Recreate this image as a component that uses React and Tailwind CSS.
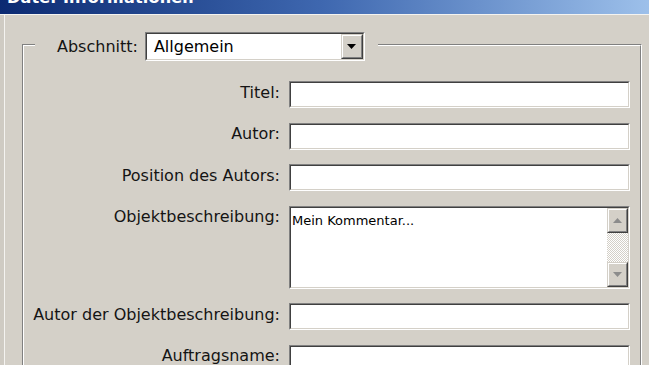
import React from "react";

const Sunken = ({ className = "", innerClassName = "", children }) => (
  <div className={`border border-t-[#808080] border-l-[#808080] border-b-white border-r-white ${className}`}>
    <div className={`h-full border border-t-[#404040] border-l-[#404040] border-b-[#d4d0c8] border-r-[#d4d0c8] bg-white ${innerClassName}`}>
      {children}
    </div>
  </div>
);

const RaisedButton = ({ className = "", children }) => (
  <div className={`border border-t-[#d4d0c8] border-l-[#d4d0c8] border-b-[#404040] border-r-[#404040] ${className}`}>
    <div className="h-full flex items-center justify-center border border-t-white border-l-white border-b-[#808080] border-r-[#808080] bg-[#d4d0c8]">
      {children}
    </div>
  </div>
);

const Arrow = ({ up, color = "#000" }) => (
  <svg width="9" height="5" viewBox="0 0 9 5">
    {up ? (
      <path d="M4.5 0 L9 5 L0 5 Z" fill={color} />
    ) : (
      <path d="M0 0 L9 0 L4.5 5 Z" fill={color} />
    )}
  </svg>
);

const Row = ({ label, children }) => (
  <div className="flex items-start">
    <div className="w-[256px] h-[23px] flex items-center justify-end whitespace-nowrap">{label}</div>
    <div className="ml-[9px] w-[341px]">{children}</div>
  </div>
);

export default function App() {
  return (
    <div className="w-[649px] h-[365px] overflow-hidden bg-[#d4d0c8] text-[16px] leading-[20px] text-[#141414] font-['DejaVu_Sans',sans-serif]">
      {/* Title bar */}
      <div className="h-[14px] overflow-hidden bg-gradient-to-r from-[#0c2a72] via-[#3f68b0] to-[#9dc0ea] pl-[7px]">
        <div className="mt-[-10px] text-white font-bold text-[16px] leading-[16px] tracking-[0.2px]">Datei-Informationen</div>
      </div>
      <div className="h-px bg-[#f4f3f0]" />

      <div className="flex h-[350px]">
        <div className="w-[4px] bg-[#cfcbc3]" />
        <div className="w-px bg-[#f4f3f0]" />
        <div className="flex-1">
          {/* Group box */}
          <div className="relative mt-[29px] ml-[17px] w-[620px] border border-t-[#808080] border-l-[#808080] border-b-white border-r-white">
            <div className="border border-t-white border-l-white border-b-[#808080] border-r-[#808080] pt-[35px] pr-[10px] pb-[20px]">
              <div className="flex flex-col gap-[14.5px]">
                <Row label="Titel:">
                  <Sunken className="h-[27px]" />
                </Row>
                <Row label="Autor:">
                  <Sunken className="h-[27px]" />
                </Row>
                <Row label="Position des Autors:">
                  <Sunken className="h-[27px]" />
                </Row>
                <Row label="Objektbeschreibung:">
                  <Sunken className="h-[83px]" innerClassName="flex">
                    <div className="flex-1 pl-[1px] pt-[5px] text-[13px] leading-[16px] text-black">Mein Kommentar...</div>
                    <div className="w-[21px] flex flex-col">
                      <RaisedButton className="h-[25px]">
                        <Arrow up color="#8c8c8c" />
                      </RaisedButton>
                      <div className="flex-1 bg-[repeating-conic-gradient(#ffffff_0%_25%,#d4d0c8_0%_50%)] bg-[length:2px_2px]" />
                      <RaisedButton className="h-[25px]">
                        <Arrow color="#8c8c8c" />
                      </RaisedButton>
                    </div>
                  </Sunken>
                </Row>
                <Row label="Autor der Objektbeschreibung:">
                  <Sunken className="h-[27px]" />
                </Row>
                <Row label="Auftragsname:">
                  <Sunken className="h-[27px]" />
                </Row>
              </div>
            </div>

            {/* Legend over the top border */}
            <div className="absolute top-[-13px] left-[12px] h-[29px] flex items-center bg-[#d4d0c8] pl-[22px] pr-[13px]">
              <span className="whitespace-nowrap">Abschnitt:</span>
              <Sunken className="ml-[7px] w-[220px] h-[29px]" innerClassName="flex items-stretch">
                <div className="flex-1 flex items-center pl-[7px] text-black">Allgemein</div>
                <RaisedButton className="w-[22px]">
                  <Arrow />
                </RaisedButton>
              </Sunken>
            </div>
          </div>
        </div>
      </div>
    </div>
  );
}
